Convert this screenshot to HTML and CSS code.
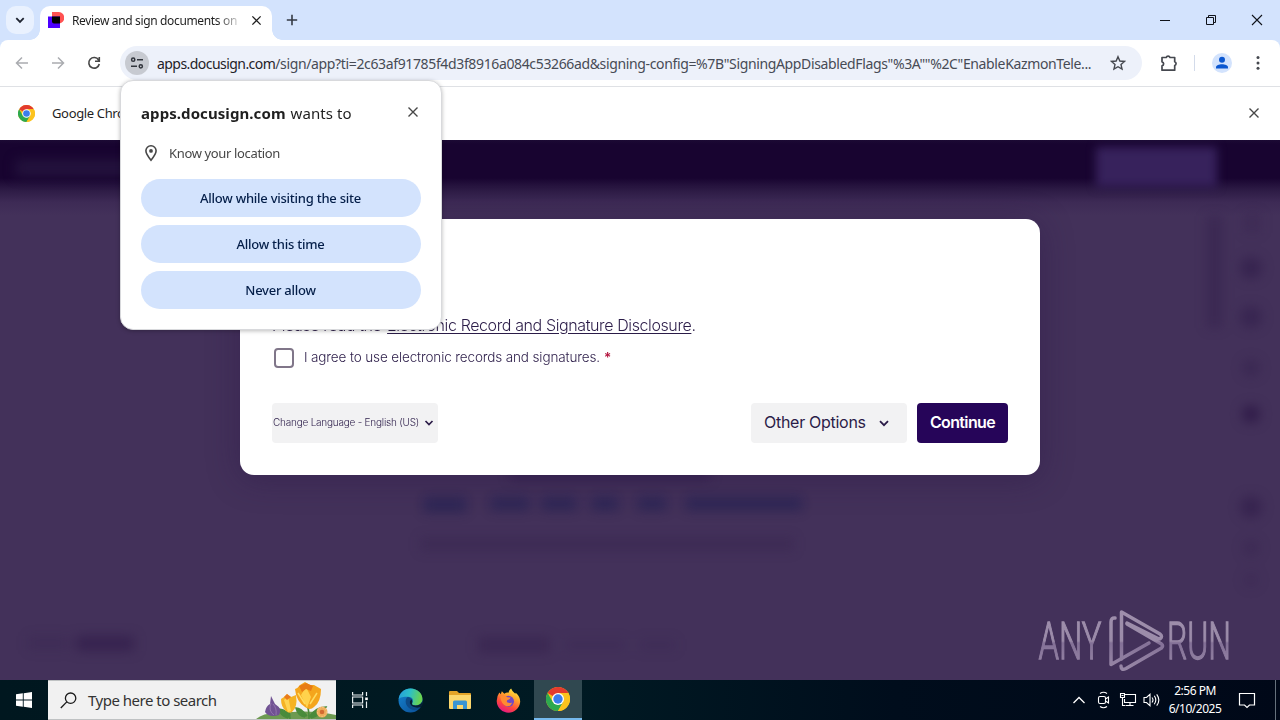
FILE: index.html
```html
<!DOCTYPE html>
<html lang="en">
<head>
<meta charset="utf-8">
<title>Review and sign documents</title>
<link rel="stylesheet" href="styles.css">
</head>
<body>
<svg width="0" height="0" class="defs">
  <symbol id="chrome" viewBox="0 0 24 24">
    <circle cx="12" cy="12" r="12" fill="#fbc116"/>
    <path d="M12 12 1.6 6A12 12 0 0 1 22.4 6H12z" fill="#e33b2e"/>
    <path d="M1.6 6A12 12 0 0 0 12 24l5.2-9L12 12 6.8 15z" fill="#2da94f"/>
    <path d="M22.4 6H12l5.2 9L12 24A12 12 0 0 0 22.4 6z" fill="#fcc31e"/>
    <circle cx="12" cy="12" r="6" fill="#fff"/><circle cx="12" cy="12" r="4.7" fill="#3b7ded"/>
  </symbol>
  <symbol id="cross" viewBox="0 0 12 12"><path d="M1.5 1.5l9 9M10.5 1.5l-9 9" fill="none" stroke="currentColor" stroke-width="1.4"/></symbol>
</svg>
<div class="screen">
  <header class="tabstrip">
    <button class="tab-search"><svg width="12" height="12" viewBox="0 0 12 12"><path d="M2.3 4.2 6 7.9l3.7-3.7" fill="none" stroke="#1f2430" stroke-width="1.8"/></svg></button>
    <div class="tab">
      <svg width="16" height="16" viewBox="0 0 16 16"><path d="M4 0h7a5 5.500 0 0 1 0 11.500H4z" fill="#ff5252"/><path d="M0 4.500h12V16H0z" fill="#4c00ff"/><path d="M4 4.500h8v7H6a2 2 0 0 1-2-2z" fill="#000"/></svg>
      <span class="tab-title">Review and sign documents on</span>
      <svg class="tab-close" width="11" height="11"><use href="#cross"/></svg>
    </div>
    <svg class="new-tab" width="12" height="12" viewBox="0 0 12 12"><path d="M6 .8v10.400M.8 6h10.400" stroke="#353a44" stroke-width="1.600"/></svg>
    <div class="window-controls">
      <svg width="12" height="12" viewBox="0 0 12 12"><path d="M1 6.500h10" stroke="#10131a"/></svg>
      <svg width="12" height="12" viewBox="0 0 12 12"><path d="M1.500 3.500h7v7h-7zM3.500 3.500v-2h7v7h-2" fill="none" stroke="#10131a"/></svg>
      <svg width="12" height="12" viewBox="0 0 12 12"><path d="M1 1l10 10M11 1 1 11" stroke="#10131a" stroke-width="1.100"/></svg>
    </div>
  </header>

  <div class="toolbar-wrap">
    <div class="toolbar">
      <div class="nav">
        <svg width="16" height="16" viewBox="0 0 16 16"><path d="M14 8H3M8 2.500 2.500 8 8 13.500" fill="none" stroke="#aaacb0" stroke-width="1.500"/></svg>
        <svg width="16" height="16" viewBox="0 0 16 16"><path d="M2 8h11M8 2.500 13.500 8 8 13.500" fill="none" stroke="#aaacb0" stroke-width="1.500"/></svg>
        <svg width="16" height="16" viewBox="0 0 16 16"><path d="M12.600 5A5.300 5.300 0 1 0 13.300 9M13.300 2v4.300H9" fill="none" stroke="#474747" stroke-width="1.600"/></svg>
      </div>
      <div class="omnibox">
        <span class="site-info"><svg width="16" height="16" viewBox="0 0 16 16" fill="none" stroke="#30343c" stroke-width="1.500"><circle cx="4.200" cy="4.700" r="1.600"/><path d="M8 4.700h6M2 11.300h6"/><circle cx="11.800" cy="11.300" r="1.600"/></svg></span>
        <span class="url"><b>apps.docusign.com</b>/sign/app?ti=2c63af91785f4d3f8916a084c53266ad&amp;signing-config=%7B"SigningAppDisabledFlags"%3A""%2C"EnableKazmonTele...</span>
        <svg class="star" width="16" height="16" viewBox="0 0 16 16"><path d="M8 1.700l1.850 4.350 4.700.4-3.550 3.100 1.050 4.600L8 11.700l-4.050 2.450L5 9.550l-3.550-3.100 4.700-.4z" fill="none" stroke="#45484f" stroke-width="1.400"/></svg>
      </div>
      <svg class="ext" width="18" height="18" viewBox="0 0 18 18"><path d="M2 3.500h4.200a2 2 0 0 1 3.800 0h4.700v4.200a2 2 0 0 1 0 3.800v4.700H2v-4.300a2.100 2.100 0 0 0 0-4.100z" fill="none" stroke="#45484f" stroke-width="1.700" stroke-linejoin="round"/></svg>
      <i class="divider"></i>
      <span class="avatar"><svg width="14" height="14" viewBox="0 0 14 14" fill="#0b57d0"><circle cx="7" cy="3.800" r="3"/><path d="M1 12.600v-1.400c0-4 12-4 12 0v1.400z"/></svg></span>
      <svg class="kebab" width="4" height="16" viewBox="0 0 4 16" fill="#45484f"><circle cx="2" cy="2.500" r="1.500"/><circle cx="2" cy="7.900" r="1.500"/><circle cx="2" cy="13.300" r="1.500"/></svg>
    </div>
  </div>

  <div class="infobar">
    <svg width="17" height="17"><use href="#chrome"/></svg>
    <span>Google Chrome</span>
    <svg class="infobar-close" width="12" height="12"><use href="#cross"/></svg>
  </div>

  <main class="page">
    <div class="backdrop">
      <i class="bar-text"></i><i class="bar-button"></i>
      <svg class="haze" width="1280" height="540">
        <g class="blur" fill="#291443">
          <rect x="1207" y="76" width="15" height="112" opacity=".3"/>
          <rect x="1243" y="73" width="18" height="20" opacity=".17"/>
          <circle cx="1251" cy="128" r="11" opacity=".45"/><circle cx="1251" cy="177" r="11" opacity=".4"/>
          <circle cx="1251" cy="228" r="9" opacity=".3"/><circle cx="1251" cy="274" r="9" opacity=".75"/>
          <circle cx="1251" cy="367" r="11" opacity=".45"/><circle cx="1251" cy="408" r="9" opacity=".2"/><circle cx="1251" cy="440" r="8" opacity=".15"/>
          <rect x="420" y="397" width="374" height="14" opacity=".2"/>
          <rect x="28" y="496" width="40" height="14" opacity=".15"/><rect x="76" y="496" width="58" height="15" opacity=".5"/>
          <rect x="478" y="497" width="72" height="16" opacity=".33"/><rect x="565" y="499" width="60" height="12" opacity=".13"/><rect x="640" y="499" width="36" height="12" opacity=".13"/>
          <rect x="510" y="325" width="200" height="15" opacity=".4"/>
        </g>
        <g class="blur" fill="#202052" opacity=".6">
          <rect x="424" y="357" width="42" height="15"/><rect x="491" y="357" width="38" height="13"/><rect x="542" y="357" width="34" height="13"/><rect x="592" y="357" width="26" height="13"/><rect x="638" y="357" width="28" height="13"/><rect x="686" y="357" width="54" height="13"/><rect x="740" y="357" width="62" height="13"/>
        </g>
      </svg>
    </div>
    <section class="modal">
      <p class="disclosure">Please read the <a>Electronic Record and Signature Disclosure</a>.</p>
      <label class="agree"><i class="checkbox"></i><span>I agree to use electronic records and signatures.</span><b>*</b></label>
      <div class="actions">
        <button class="language"><span>Change Language - English (US)</span><svg width="10" height="8" viewBox="0 0 10 8"><path d="M1.500 2 5 5.500 8.500 2" fill="none" stroke="#2b1c48" stroke-width="1.700"/></svg></button>
        <button class="options"><span>Other Options</span><svg width="12" height="9" viewBox="0 0 12 9"><path d="M2 2.200 6 6.200l4-4" fill="none" stroke="#2b1c48" stroke-width="1.800"/></svg></button>
        <button class="continue"><span>Continue</span></button>
      </div>
    </section>
    <svg class="watermark" width="230" height="70" viewBox="0 0 230 70">
      <defs><linearGradient id="fade" gradientUnits="userSpaceOnUse" x1="0" y1="0" x2="0" y2="64"><stop offset="0" stop-color="#a99ab5"/><stop offset=".5" stop-color="#a595b2"/><stop offset=".53" stop-color="#8b789e"/><stop offset="1" stop-color="#a595b2"/></linearGradient></defs>
      <g fill="url(#fade)" stroke="url(#fade)" stroke-width="1.300" class="brand">
        <text x="2.500" y="50" textLength="63" lengthAdjust="spacingAndGlyphs">ANY</text>
        <text x="131" y="50" textLength="64" lengthAdjust="spacingAndGlyphs">RUN</text>
      </g>
      <g fill="none" stroke="url(#fade)" stroke-width="3.500" stroke-linejoin="round" stroke-linecap="round">
        <path d="M79 9q-4-.5-4 4v42.500L113 34"/>
        <path d="M85.500 50V3L124 25q3 2.500 0 5-2 0-3-1L91 14"/>
        <path d="M85 57q0 5 5 2.500L125.500 39q2-2 0-4L91 15"/>
      </g>
    </svg>
  </main>

  <footer class="taskbar">
    <button class="start"><svg width="16" height="16" viewBox="0 0 16 16" fill="#fff"><path d="M0 2.300 6.800 1.300v6.200H0zM7.700 1.200 16 0v7.500H7.700zM0 8.400h6.800v6.300L0 13.700zM7.700 8.400H16V16l-8.300-1.200z"/></svg></button>
    <div class="search">
      <svg width="17" height="17" viewBox="0 0 17 17" fill="none" stroke="#1b1b1b" stroke-width="1.300"><circle cx="10.600" cy="6.200" r="5.200"/><path d="M6.800 9.900.8 16"/></svg>
      <span>Type here to search</span>
      <svg class="flowers" width="80" height="38" viewBox="0 0 80 38">
        <path d="M0 38q8-7 24-6 30-4 56 2v4z" fill="#6d9a51"/>
        <path d="M34 38q0-8-3-14M53 38q0-10-2-15M53 36q7-10 17-10-5 8-15 11M34 36q-2-7-11-8 1 7 9 9M51 35q-6-8-11-8 2 8 9 9" fill="#498b3c" stroke="#498b3c" stroke-width="1.500"/>
        <path d="M9 31q1-6 5-8l1-8 4 8q8 5 4 11-10 3-14-3z" fill="#705293"/><path d="M15 22q-3 8 3 12M17 23q4 4 3 11" fill="none" stroke="#a88abb" stroke-width=".6"/>
        <path d="M25 18l3-2 3-3 4 3 5-2q2 12-4 17-3 2-6-1-5-4-5-12z" fill="#f5b323"/><path d="M32 15l3 15-3 1-4-12z" fill="#ffd452"/><path d="M28 16l3-3 4 3-4 3z" fill="#e97b1c"/>
        <path d="M39 8q3-1 5-4l5-3 5 3 4 0 7 4q0 13-7 18-4 4-9 0-9-6-10-18z" fill="#f4a51c"/><path d="M50 6l5 10-4 11-6-13z" fill="#ffd24c"/><path d="M43 5l7-3 7 3-2 5-5-2-4 3z" fill="#e77b16"/><path d="M42 12l7 11M61 12l-7 11" stroke="#ffdc60" stroke-width="1.500"/>
        <circle cx="66" cy="31" r="5.500" fill="#efad5b"/><circle cx="66" cy="31" r="2.300" fill="#d36b31"/><circle cx="66" cy="31" r="4.500" fill="none" stroke="#f6c886" stroke-dasharray="1.500 1.500"/>
      </svg>
    </div>
    <div class="app view"><svg width="18" height="18" viewBox="0 0 18 18" fill="none" stroke="#e8eef0" stroke-width="1.200"><path d="M1.600 1v3h10V1M1.600 17v-3h10v3M1.600 6h10v6h-10zM15.500 1v4M15.500 10.500V17"/><path d="M14.200 6.500h2.600v2.600h-2.600z" fill="#fff" stroke="none"/></svg></div>
    <div class="app"><svg width="25" height="25" viewBox="0 0 24 24">
      <defs><linearGradient id="eg" x1="0" y1="0" x2="1" y2=".2"><stop offset="0" stop-color="#259bdd"/><stop offset=".5" stop-color="#2dbfc7"/><stop offset="1" stop-color="#69d350"/></linearGradient><linearGradient id="eb" x1="0" y1="0" x2="1" y2="1"><stop offset="0" stop-color="#1685d2"/><stop offset="1" stop-color="#0a4c93"/></linearGradient></defs>
      <circle cx="12" cy="12" r="11.500" fill="url(#eb)"/><path d="M.6 11C1.500 4.500 6 .5 12 .5c7 0 11.500 5 11.500 10 0 4-3 6.200-6.500 6.200-2.500 0-4-.9-3.500-1.900 2-2.600.5-6.300-3.700-6.300C5.500 8.500 1.500 9 .6 11z" fill="url(#eg)"/><path d="M9.300 8.600C6 11 7 17.500 12 20.200c4 2 7.500.7 9.800-1.700C17 20 12 18.600 11.300 14.500c-.2-1.500.6-2.700 1.700-3.500-.8-1.500-2-2.300-3.700-2.400z" fill="#0d4a87"/><path d="M13.500 14.800c-.3 1 1 1.900 3.500 1.900 2.600 0 5-1.200 6-3.300l.7 2.600-1.700 2.200c-4 1.600-9.500.4-10.600-3.500-.3-1.500.4-2.900 1.600-3.800q1.500 2.200.5 3.900z" fill="#061f35"/>
    </svg></div>
    <div class="app"><svg width="22" height="20" viewBox="0 0 22 20"><path d="M0 2q0-1 1-1h7l2 2h11q1 0 1 1v13H0z" fill="#e4a428"/><path d="M0 5h22v13q0 1-1 1H1q-1 0-1-1z" fill="#fcd76d"/><path d="M4 19v-7q0-1.500 1.500-1.500h11Q18 10.500 18 12v7h-4v-4H8v4z" fill="#3a95d3"/></svg></div>
    <div class="app"><svg width="25" height="25" viewBox="0 0 24 24"><defs><linearGradient id="ff" x1=".8" y1="0" x2=".3" y2="1"><stop offset="0" stop-color="#fff044"/><stop offset=".35" stop-color="#ffa72c"/><stop offset=".7" stop-color="#ff463c"/><stop offset="1" stop-color="#e31587"/></linearGradient></defs><path d="M3.200 4.300 4.600 6l1-3L8 5.500Q10 4 12 4.500 12.500 2 14.500.5q1 3 4 5l.5-1q4.500 4 4.200 9C22.500 20 17.500 23.700 12 23.700S1 19.500.7 13Q.5 8 3.200 4.300z" fill="url(#ff)"/><circle cx="12" cy="12.800" r="5.300" fill="#7048c6"/><path d="M4 8q4-2 7 .8l3 .4q-.4 2-3 2.200-1.200 1.300 0 2.600 2.600 1 4.400-.2-1 4.200-5.500 3.600Q5 16 4 8z" fill="#ff8c31"/></svg></div>
    <div class="app current"><svg width="24" height="24"><use href="#chrome"/></svg></div>
    <div class="tray">
      <svg width="14" height="10" viewBox="0 0 14 10"><path d="M1.500 8 7 2.500 12.500 8" fill="none" stroke="#fff" stroke-width="1.300"/></svg>
      <svg class="meet" width="14" height="18" viewBox="0 0 14 18" fill="none" stroke="#fff" stroke-width="1.100"><rect x="1.500" y="5.500" width="7" height="7" rx="1.500"/><path d="M8.500 8l3-2v6l-3-2M3 2.500q3.500-2.500 7 0M3 15.500q3.500 2.500 7 0"/></svg>
      <svg width="18" height="16" viewBox="0 0 18 16" fill="none" stroke="#fff" stroke-width="1.100"><path d="M6 2.500h10.500v8H5.500V7M11 10.500v3M7 13.500h7.500M1.500 1.500h4v4h-4zM3.500 5.500v8h3M2.500 3.500h2"/></svg>
      <svg class="volume" width="18" height="16" viewBox="0 0 18 16" fill="none" stroke="#fff" stroke-width="1.100"><path d="M1 5.500h2.500L7 2.300v11.400l-3.500-3.200H1zM9 5.500q2 2.500 0 5M11.300 3.800q3 4.200 0 8.400M13.700 2.300q4.300 5.700 0 11.400"/></svg>
      <div class="clock"><span>2:56 PM</span><span>6/10/2025</span></div>
      <svg width="18" height="18" viewBox="0 0 18 18"><path d="M1.500 2.500h15v11.500h-5L9 16.500 6.500 14h-5z" fill="none" stroke="#fff" stroke-width="1.200"/></svg>
    </div>
  </footer>

  <aside class="prompt">
    <div class="prompt-head"><h1><b>apps.docusign.com</b><span>wants to</span></h1><svg width="12" height="12"><use href="#cross"/></svg></div>
    <div class="permission"><svg width="14" height="18" viewBox="0 0 14 18"><path d="M7 1.800A5 5 0 0 0 1.900 6.800C1.900 10 7 16.200 7 16.200s5.100-6.200 5.100-9.400A5 5 0 0 0 7 1.800z" fill="none" stroke="#474747" stroke-width="1.600"/><circle cx="7" cy="6.900" r="1.900" fill="#474747"/></svg><span>Know your location</span></div>
    <button>Allow while visiting the site</button>
    <button>Allow this time</button>
    <button>Never allow</button>
  </aside>
</div>
</body>
</html>
```

FILE: styles.css
```css
* { box-sizing: border-box; }
body { margin: 0; font-family: "Noto Sans", "Open Sans", sans-serif; }
button { border: 0; padding: 0; font: inherit; color: inherit; }
svg { display: block; flex: none; }
span, b, p { white-space: nowrap; }
.defs { position: absolute; }
.screen { position: relative; width: 1280px; height: 720px; overflow: hidden; display: flex; flex-direction: column; background: #fff; }

.tabstrip { height: 40px; flex: none; background: #d3e3fd; display: flex; align-items: flex-start; padding-left: 6px; }
.tab-search { width: 28px; height: 28px; margin-top: 6px; border-radius: 10px; background: #e9f1fe; display: grid; place-items: center; }
.tab { position: relative; width: 232px; height: 34px; margin: 6px 0 0 6px; background: #fff; border-radius: 10px 10px 0 0; display: flex; align-items: center; padding: 0 10px 6px 8px; }
.tab::before, .tab::after { content: ""; position: absolute; bottom: 0; width: 10px; height: 10px; }
.tab::before { left: -10px; background: radial-gradient(circle at 0 0, transparent 9.500px, #fff 10px); }
.tab::after { right: -10px; background: radial-gradient(circle at 100% 0, transparent 9.500px, #fff 10px); }
.tab-title { width: 168px; margin-left: 8px; font-size: 12px; letter-spacing: -.35px; color: #1f1f1f; -webkit-mask-image: linear-gradient(90deg, #000 86%, #0003 99%); mask-image: linear-gradient(90deg, #000 86%, #0003 99%); }
.tab-close { margin-left: 11px; color: #1f1f1f; }
.new-tab { margin: 14px 0 0 14px; }
.window-controls { display: flex; gap: 34px; margin: 14px 17px 0 auto; }

.toolbar-wrap { background: #d3e3fd; flex: none; }
.toolbar { height: 47px; background: #fff; border-radius: 8px 8px 0 0; border-bottom: 1px solid #dfe1e5; display: flex; align-items: center; padding-left: 14px; }
.nav { display: flex; gap: 20px; width: 106px; }
.omnibox { width: 1022px; height: 34px; border-radius: 17px; background: #edf1fa; display: flex; align-items: center; padding-left: 5px; }
.site-info { width: 24px; height: 24px; border-radius: 50%; background: #c7cad1; display: grid; place-items: center; }
.url { margin-left: 8px; width: 940px; font-size: 14px; letter-spacing: -.36px; color: #474b55; }
.url b { font-weight: 400; color: #1f2228; letter-spacing: -.55px; }
.star { margin-left: 13px; }
.ext { margin-left: 18px; }
.divider { width: 1px; height: 16px; margin-left: 16px; background: #d3dbea; }
.avatar { width: 20px; height: 20px; margin-left: 17px; border-radius: 50%; background: #d3e3fd; display: grid; place-items: center; }
.kebab { margin-left: 24px; }

.infobar { height: 53px; flex: none; display: flex; align-items: center; padding: 0 20px 1px 18px; font-size: 13px; letter-spacing: -.35px; color: #1f1f1f; }
.infobar span { margin-left: 17px; }
.infobar-close { margin-left: auto; color: #474747; }

.page { position: relative; height: 540px; flex: none; display: flex; justify-content: center; align-items: flex-start; padding-top: 79px; background: #43315a; overflow: hidden; }
.backdrop { position: absolute; inset: 0; background: linear-gradient(#1c0a34 0, #180430 4px, #180430 38px, #2d1b45 50px, #3d2a55 62px, #43315a 75px); }
.bar-text { position: absolute; left: 16px; top: 20px; width: 150px; height: 16px; background: #24133d; filter: blur(6px); }
.bar-button { position: absolute; left: 1096px; top: 7px; width: 121px; height: 40px; background: #37225c; filter: blur(5px); }
.haze { position: absolute; left: 0; top: 0; }
.blur { filter: blur(6px); }
.modal { position: relative; width: 800px; height: 256px; border-radius: 14px; background: #fff; padding: 94px 32px 32px; color: #2b1c48; font-family: Inter, sans-serif; font-weight: 300; display: flex; flex-direction: column; box-shadow: 0 4px 32px #29144366; }
.disclosure { margin: 0; font-size: 16px; line-height: 24px; letter-spacing: -.39px; }
.disclosure a { text-decoration: underline; text-underline-offset: 2px; margin-left: 1.500px; }
.agree { display: flex; align-items: center; height: 22px; margin-top: 10px; padding-left: 2px; font-size: 13.500px; letter-spacing: -.13px; }
.agree span, .agree b { padding-bottom: 2px; }
.checkbox { width: 20px; height: 20px; margin-right: 10px; border: 2px solid #807689; border-radius: 4px; }
.agree b { margin-left: 4px; color: #b3123c; font-weight: 600; }
.actions { display: flex; align-items: stretch; height: 40px; margin-top: auto; }
.actions button { display: flex; align-items: center; border-radius: 4px; background: #f2f2f3; }
.actions span { padding-bottom: 2px; }
.actions .language { width: 166px; padding-left: 1px; gap: 5px; font-size: 10px; letter-spacing: -.22px; }
.actions .options { width: 156px; margin: 0 10px 0 auto; padding-left: 13px; gap: 12px; font-size: 16px; font-weight: 400; letter-spacing: -.28px; }
.actions .continue { width: 91px; justify-content: center; background: #260559; color: #fff; font-size: 16px; font-weight: 600; letter-spacing: -.65px; }
.watermark { position: absolute; left: 1036px; top: 469px; opacity: .9; }
.brand { font: 300 52px Roboto, sans-serif; }

.taskbar { height: 40px; flex: none; display: flex; background: linear-gradient(90deg, #00171f, #001a23 45%, #000d1c 70%, #000818); }
.start { width: 48px; background: transparent; display: grid; place-items: center; }
.search { width: 288px; background: #f1f1f1; border: 1px solid #bfc2c3; border-width: 1px 0; display: flex; align-items: center; padding-left: 12px; font-size: 15px; color: #333; }
.search span { width: 129px; margin-left: 11px; letter-spacing: -.5px; }
.flowers { margin-left: auto; }
.app { width: 49px; display: grid; place-items: center; padding-left: 2px; }
.app.view { padding-left: 0; padding-right: 2px; }
.app.current { width: 48px; padding-left: 0; background: #304850; border-bottom: 2px solid #76b9ed; margin-left: 2px; }
.tray { margin-left: auto; width: 210px; display: flex; align-items: center; position: relative; padding-left: 2px; gap: 8px; }
.tray::after { content: ""; position: absolute; right: 4px; top: 0; width: 1px; height: 40px; background: #66717c; }
.meet { margin-left: 3px; }
.volume { margin-left: -2px; }
.clock { width: 56px; margin: 0 7px 0 -2px; display: flex; flex-direction: column; align-items: center; font-size: 12px; line-height: 18px; letter-spacing: -.48px; color: #fff; }

.prompt { position: absolute; left: 120px; top: 80px; width: 322px; height: 250px; padding: 17px 20px 20px; border: 1px solid #d8d9dc; border-radius: 13px; background: #fff; box-shadow: 0 1px 4px #0004; display: flex; flex-direction: column; gap: 8px; }
.prompt-head { display: flex; align-items: center; justify-content: space-between; height: 28px; padding-right: 2px; color: #474747; }
.prompt h1 { margin: 1px 0 0; display: flex; gap: 5px; font-size: 15px; font-weight: 400; letter-spacing: .08px; color: #1f1f1f; }
.permission { display: flex; align-items: center; gap: 11px; height: 26px; margin: 6px 0 5px; padding-left: 3px; font-size: 13px; color: #474747; letter-spacing: -.35px; }
.prompt button { height: 38px; padding-right: 1px; border-radius: 19px; background: #d3e3fd; color: #041e49; font-size: 13px; font-weight: 500; letter-spacing: -.25px; flex: none; }
```
